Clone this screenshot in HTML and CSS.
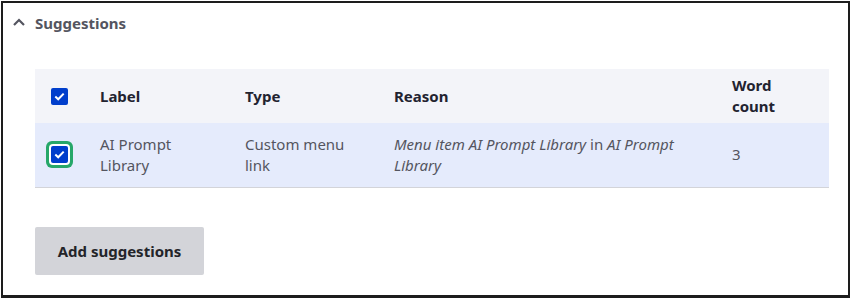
FILE: index.html
```html
<!DOCTYPE html>
<html>
<head>
<meta charset="utf-8">
<link rel="stylesheet" href="styles.css">
</head>
<body>
<div class="frame">
  <div class="summary">
    <svg class="chev" width="12" height="8" viewBox="0 0 12 8"><path d="M1 7 L6 2 L11 7" fill="none" stroke="#545560" stroke-width="2.2"/></svg>
    <span class="summary-title">Suggestions</span>
  </div>
  <div class="content">
    <table class="tbl">
      <thead>
        <tr>
          <th class="c1"><span class="cb"><svg width="11" height="9" viewBox="0 0 11 9"><path d="M1.3 4.6 L4.2 7.3 L9.7 1.6" fill="none" stroke="#fff" stroke-width="2"/></svg></span></th>
          <th class="c2">Label</th>
          <th class="c3">Type</th>
          <th class="c4">Reason</th>
          <th class="c5">Word count</th>
        </tr>
      </thead>
      <tbody>
        <tr class="sel">
          <td class="c1"><span class="cb focus"><svg width="11" height="9" viewBox="0 0 11 9"><path d="M1.3 4.6 L4.2 7.3 L9.7 1.6" fill="none" stroke="#fff" stroke-width="2"/></svg></span></td>
          <td>AI Prompt Library</td>
          <td>Custom menu link</td>
          <td><em>Menu item AI Prompt Library</em> in <em>AI Prompt Library</em></td>
          <td>3</td>
        </tr>
      </tbody>
    </table>
    <button class="btn">Add suggestions</button>
  </div>
</div>
</body>
</html>
```

FILE: styles.css
```css
html, body {
  margin: 0;
  padding: 0;
  background: #fff;
}
body {
  font-family: "Noto Sans", "Open Sans", sans-serif;
  font-size: 15px;
  color: #545560;
}
.frame {
  margin: 1px 1px 0 1px;
  height: 292px;
  border: 2px solid #1d1d1d;
  border-bottom-width: 3px;
  box-sizing: content-box;
}
.summary {
  display: flex;
  align-items: center;
  height: 40px;
  padding-left: 10px;
  box-sizing: border-box;
}
.chev {
  margin-right: 10px;
  margin-top: -2px;
}
.summary-title {
  font-weight: 700;
  font-size: 15px;
  color: #545560;
}
.content {
  padding: 26px 18px 0 32px;
}
.tbl {
  width: 794px;
  border-collapse: collapse;
  table-layout: fixed;
}
.tbl th, .tbl td {
  box-sizing: border-box;
  text-align: left;
  vertical-align: middle;
  padding: 0 12px;
  line-height: 21px;
}
.tbl th {
  background: #f3f4f9;
  color: #222330;
  font-weight: 700;
  height: 54px;
}
.tbl td {
  height: 64px;
  border-bottom: 1px solid #d3d4d9;
}
.sel td {
  background: #e5ebfc;
}
.c1 { width: 53px; }
.tbl .c1 { padding: 0 0 0 16px; }
.c2 { width: 145px; }
.c3 { width: 149px; }
.c4 { width: 338px; }
.c5 { width: 109px; }
.tbl .c5 { padding-right: 24px; }
.cb {
  display: flex;
  align-items: center;
  justify-content: center;
  width: 17px;
  height: 17px;
  background: #003ecc;
  border-radius: 2px;
}
.cb.focus {
  box-shadow: 0 0 0 2px #fff, 0 0 0 5px #26a769;
  border-radius: 2px;
}
.btn {
  display: block;
  margin-top: 39px;
  width: 169px;
  height: 48px;
  background: #d3d4d9;
  border: none;
  border-radius: 2px;
  font-family: "Noto Sans", "Open Sans", sans-serif;
  font-size: 15px;
  font-weight: 700;
  color: #232429;
  padding: 0;
}
```
